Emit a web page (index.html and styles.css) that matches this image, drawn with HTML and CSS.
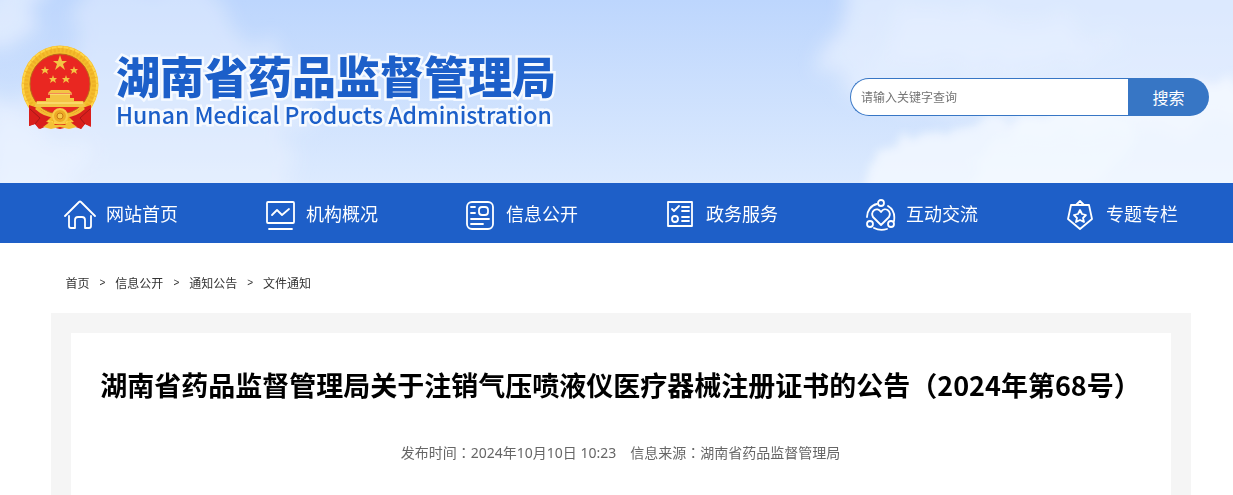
FILE: index.html
```html
<!DOCTYPE html>
<html lang="zh-CN">
<head>
    <meta charset="UTF-8">
    <meta name="viewport" content="width=device-width, initial-scale=1.0">
    <title>湖南省药品监督管理局</title>
    <link rel="stylesheet" href="styles.css">
</head>
<body>
    <header class="header">
        <svg class="sky" viewBox="0 0 1233 183" preserveAspectRatio="xMidYMid slice" aria-hidden="true">
            <defs>
                <linearGradient id="sky-fill" x1="0" y1="0" x2="0" y2="1">
                    <stop offset="0" stop-color="#bdd6fd"/>
                    <stop offset="1" stop-color="#dceafe"/>
                </linearGradient>
                <filter id="cloud" x="-20%" y="-20%" width="140%" height="140%">
                    <feTurbulence type="fractalNoise" baseFrequency="0.03" numOctaves="5" seed="7" result="noise"/>
                    <feDisplacementMap in="SourceGraphic" in2="noise" scale="50" xChannelSelector="R" yChannelSelector="G"/>
                    <feGaussianBlur stdDeviation="9"/>
                </filter>
                <filter id="cloud-edge" x="-20%" y="-20%" width="140%" height="140%">
                    <feTurbulence type="fractalNoise" baseFrequency="0.05" numOctaves="5" seed="3" result="noise"/>
                    <feDisplacementMap in="SourceGraphic" in2="noise" scale="30" xChannelSelector="R" yChannelSelector="G"/>
                    <feGaussianBlur stdDeviation="4"/>
                </filter>
            </defs>
            <rect width="1233" height="183" fill="url(#sky-fill)"/>
            <g fill="#f0f5ff" filter="url(#cloud)">
                <path d="M80-20H200L240 30 290 60 320 100 290 140 300 210H-20V110L50 90 80 40Z" opacity=".4"/>
                <path d="M-20-20H40L35 30 10 50H-20Z" opacity=".6"/>
                <path d="M-20 90L30 120 90 150 60 210H-20Z" opacity=".5"/>
                <path d="M865-30L845 20 825 50 835 90 900 110 960 100 1000 130 1260 130V-30Z" opacity=".6"/>
                <path d="M900 0L960 20 1060 10 1120 50 1010 70 880 60Z" opacity=".3"/>
            </g>
            <g fill="#f6f9ff" filter="url(#cloud-edge)">
                <path d="M862 210L872 160 898 140 920 132 960 132 990 116 1040 116 1090 90 1270 80V210Z" opacity=".75"/>
                <path d="M980 150L1040 110 1110 110 1140 140 1080 200H970Z" opacity=".4"/>
            </g>
        </svg>
        <a class="logo" href="#">
            <svg class="emblem" viewBox="0 0 80 86" aria-hidden="true">
                <path d="M12 60L9 81 15 79 20 84 27 81 40 84 53 81 61 84 65 79 71 82 68 60Z" fill="#d91f1c"/>
                <ellipse cx="40" cy="40" rx="38.500" ry="39.500" fill="#f5bd2c"/>
                <ellipse cx="40" cy="40" rx="34" ry="35" fill="none" stroke="#e0951c" stroke-width="4" stroke-dasharray="2 2" opacity=".3"/>
                <ellipse cx="40" cy="40" rx="37" ry="38" fill="none" stroke="#ffd549" stroke-width="2" stroke-dasharray="5 1"/>
                <circle cx="40" cy="39" r="30" fill="#e92721" stroke="#bb671b"/>
                <g fill="#f3c444">
                    <path d="M40 10L42 16H47L43 19 45 25 40 21 35 25 37 19 33 16H38Z"/>
                    <path d="M25 21l1 3h3l-2 2 1 3-3-2-3 2 1-3-2-2h3Z"/>
                    <path d="M54 21l1 3h3l-2 2 1 3-3-2-3 2 1-3-2-2h3Z"/>
                    <path d="M33 30l1 3h3l-2 2 1 3-3-2-3 2 1-3-2-2h3Z"/>
                    <path d="M46 30l1 3h3l-2 2 1 3-3-2-3 2 1-3-2-2h3Z"/>
                    <path d="M31 45H49L52 48H28ZM30 49H50V53H54V56H63L66 62H14L17 56H26V53H30Z"/>
                </g>
                <path d="M28 49H52M17 58H63" stroke="#ffed8c"/>
                <path d="M9 60C17 62 23 67 32 71L24 79 19 84 15 79 9 81ZM71 60C63 62 57 67 48 71L56 79 61 84 65 79 71 81Z" fill="#d91f1c"/>
                <path d="M10 64L20 73 15 79M70 64L60 73 65 79" fill="none" stroke="#a51717"/>
                <path d="M16 63Q25 71 34 71M64 63Q55 71 46 71" fill="none" stroke="#f2bd36" stroke-width="3"/>
                <path d="M23 82L31 76 35 80H45L49 76 57 82 49 84 40 82 31 84Z" fill="#f4c037"/>
                <circle cx="40" cy="71" r="7" fill="#edaa26" stroke="#f8cb48" stroke-width="2"/>
                <circle cx="40" cy="71" r="3" fill="#f8cb48" stroke="#c87916"/>
            </svg>
            <span class="logo-text">
                <strong class="logo-name">湖南省药品监督管理局</strong>
                <span class="logo-en" lang="en">Hunan Medical Products Administration</span>
            </span>
        </a>
        <form class="search">
            <input class="search-input" type="text" placeholder="请输入关键字查询" aria-label="请输入关键字查询">
            <button class="search-button" type="button">搜索</button>
        </form>
    </header>

    <nav class="nav">
        <div class="nav-list">
            <a class="nav-item" href="#">
                <svg class="nav-icon" viewBox="0 0 32 32" aria-hidden="true">
                    <path d="M1 17L15 3Q16 2 17 3L31 17M5 17V27Q5 29 7 29H11V21Q11 18 14 18H18Q21 18 21 21V29H25Q27 29 27 27V17"/>
                </svg>
                网站首页
            </a>
            <a class="nav-item" href="#">
                <svg class="nav-icon" viewBox="0 0 32 32" aria-hidden="true">
                    <rect x="3" y="3" width="27" height="21" rx="1"/>
                    <path d="M8 16L13 11 18 16 25 10M5 30H28"/>
                </svg>
                机构概况
            </a>
            <a class="nav-item" href="#">
                <svg class="nav-icon" viewBox="0 0 32 32" aria-hidden="true">
                    <rect x="3" y="3" width="26" height="27" rx="5"/>
                    <rect x="15" y="8" width="9" height="8" rx="3"/>
                    <path d="M7 8H11M7 14H11M7 20H25M7 25H19"/>
                </svg>
                信息公开
            </a>
            <a class="nav-item" href="#">
                <svg class="nav-icon" viewBox="0 0 32 32" aria-hidden="true">
                    <rect x="4" y="3" width="24" height="24"/>
                    <circle cx="11" cy="20" r="3"/>
                    <path d="M8 10L10 12 15 7M18 8H25M18 12H25M18 18H25M18 22H25"/>
                </svg>
                政务服务
            </a>
            <a class="nav-item" href="#">
                <svg class="nav-icon" viewBox="0 0 32 32" aria-hidden="true">
                    <circle cx="17" cy="4" r="3"/>
                    <circle cx="6" cy="25" r="3"/>
                    <circle cx="27" cy="25" r="3"/>
                    <path d="M13 5C7 6 3 12 3 18M24 7C29 10 31 16 30 22M10 29Q16 32 23 30M17 26L9 18C6 12 13 7 17 13 21 7 28 12 25 18Z"/>
                </svg>
                互动交流
            </a>
            <a class="nav-item" href="#">
                <svg class="nav-icon" viewBox="0 0 32 32" aria-hidden="true">
                    <path d="M7 6H25L28 20 16 30 4 20ZM12 6L16 2 20 6M16 11L18 15 22 16 19 19 20 23 16 21 12 23 13 19 10 16 14 15Z"/>
                </svg>
                专题专栏
            </a>
        </div>
    </nav>

    <main class="container">
        <div class="breadcrumb">
            <a href="#">首页</a>
            <span class="arrow">&gt;</span>
            <a href="#">信息公开</a>
            <span class="arrow">&gt;</span>
            <a href="#">通知公告</a>
            <span class="arrow">&gt;</span>
            <a href="#">文件通知</a>
        </div>
        <article class="article">
            <div class="article-body">
                <h1 class="title">湖南省药品监督管理局关于注销气压喷液仪医疗器械注册证书的公告<span class="mark" lang="zh-TW">（</span>2024年第68号<span class="mark" lang="zh-TW">）</span></h1>
                <p class="meta">
                    <span>发布时间<span class="mark" lang="zh-TW">：</span>2024年10月10日 10:23</span>
                    <span>信息来源<span class="mark" lang="zh-TW">：</span>湖南省药品监督管理局</span>
                </p>
            </div>
        </article>
    </main>
</body>
</html>
```
FILE: styles.css
```css
* {
    box-sizing: border-box;
}

body {
    margin: 0;
    font-family: "Noto Sans CJK SC", sans-serif;
    font-size: 12px;
    color: #333;
    background-color: white;
}

a {
    color: inherit;
    text-decoration: none;
}

/* header */
.header {
    position: relative;
    display: flex;
    align-items: center;
    justify-content: space-between;
    min-height: 183px;
    padding: 0 24px 0 20px;
}

.sky {
    position: absolute;
    inset: 0;
    z-index: -1;
    width: 100%;
    height: 100%;
}

.logo {
    display: flex;
    align-items: center;
    gap: 16px;
    margin-bottom: 7px;
    color: #1c5fc9;
}

.emblem {
    width: 80px;
    height: 86px;
}

.logo-text {
    display: flex;
    flex-direction: column;
    -webkit-text-stroke: 5px #f6faff;
    paint-order: stroke fill;
}

.logo-name {
    font-size: 44px;
    font-weight: 900;
    line-height: 52px;
}

.logo-en {
    font-size: 23px;
    font-weight: 500;
    line-height: 26px;
}

.search {
    display: flex;
    width: 359px;
    height: 38px;
    margin-top: 10px;
}

.search-input {
    flex: 1;
    min-width: 0;
    padding: 0 10px;
    border: 1px solid #3776c5;
    border-right: 0;
    border-radius: 19px 0 0 19px;
    font-family: inherit;
    font-size: 12px;
    background: white;
}

.search-input::placeholder {
    color: #757575;
}

.search-button {
    width: 81px;
    padding: 0;
    border: 0;
    border-radius: 0 19px 19px 0;
    font-family: inherit;
    font-size: 16px;
    color: white;
    background: #3776c5;
}

/* nav */
.nav {
    background: #1e5fc8;
}

.nav-list {
    display: grid;
    grid-template-columns: repeat(6, 1fr);
    max-width: 1200px;
    margin: 0 auto;
}

.nav-item {
    display: flex;
    align-items: center;
    justify-content: center;
    gap: 10px;
    height: 60px;
    padding-left: 9px;
    font-size: 18px;
    white-space: nowrap;
    color: white;
}

.nav-icon {
    width: 32px;
    height: 32px;
    margin-top: 4px;
    fill: none;
    stroke: white;
    stroke-width: 1.8;
    stroke-linejoin: round;
    stroke-linecap: round;
}

/* content */
.container {
    max-width: 1200px;
    margin: 0 auto;
    padding: 0 26px 0 34px;
}

.breadcrumb {
    display: flex;
    align-items: center;
    gap: 10px;
    padding: 30px 15px 20px;
    line-height: 20px;
}

.arrow {
    font-family: "Liberation Sans", sans-serif;
    font-size: 10px;
}

.article {
    padding: 20px 20px 0;
    background: #f5f5f5;
}

.article-body {
    min-height: 162px;
    padding: 32px 20px 30px;
    text-align: center;
    background: white;
}

.title {
    margin: 0;
    font-size: 27px;
    line-height: 40px;
    color: black;
}

.meta {
    display: flex;
    justify-content: center;
    gap: 14px;
    margin: 37px 0 0;
    font-family: "Noto Sans", "Noto Sans CJK SC", sans-serif;
    font-size: 14px;
    line-height: 20px;
    color: #666;
}

/* full-width punctuation centred in its cell */
.mark {
    font-family: "Noto Sans CJK TC", sans-serif;
}
```
